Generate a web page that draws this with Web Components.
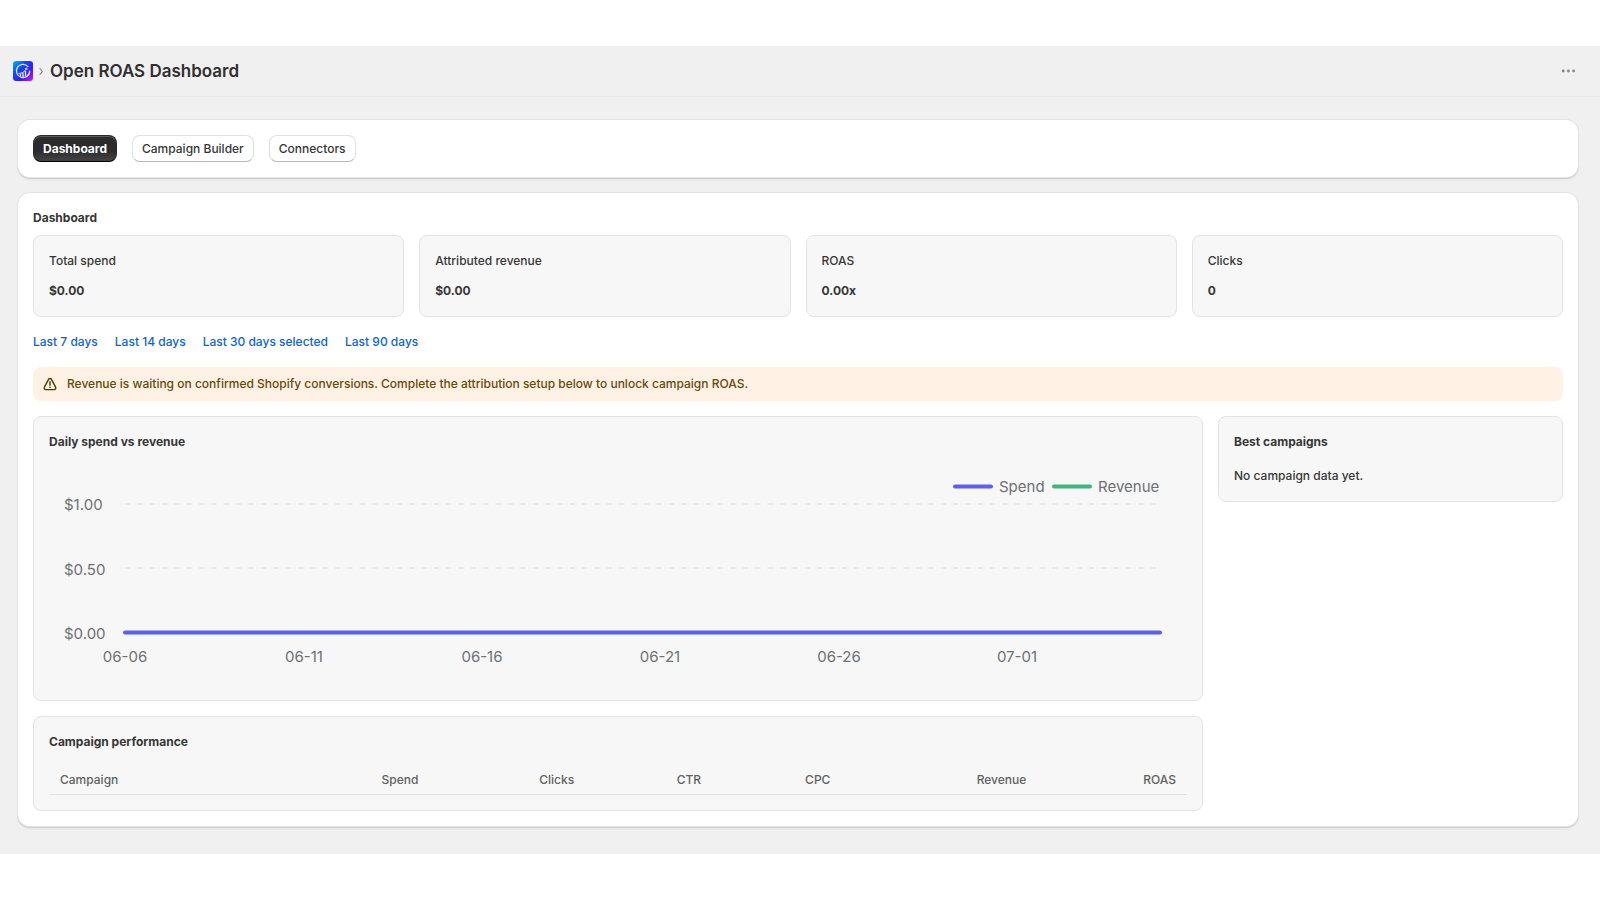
<!DOCTYPE html>
<html lang="en">
<head>
<meta charset="utf-8">
<title>Open ROAS Dashboard</title>
<style>
    body {
        margin: 0;
        padding: 46px 0;
        background: #fff;
        color: #363636;
        font-family: Inter, "Liberation Sans", sans-serif;
        font-size: 12px;
        font-weight: 500;
        line-height: 20px;
    }
</style>
</head>
<body>
<roas-app></roas-app>

<script>
class AppHeader extends HTMLElement {
    constructor() {
        super();
        this.attachShadow({ mode: 'open' });
        this.shadowRoot.innerHTML = `
        <style>
            :host {
                display: block;
                border-bottom: 1px solid #e9e9e9;
            }

            header {
                display: flex;
                align-items: center;
                height: 50px;
                padding: 0 22px 0 13px;
            }

            .chevron {
                margin: 0 6px 0 5px;
            }

            svg {
                display: block;
            }

            h1 {
                flex: 1;
                margin: 0;
                color: #303030;
                font-size: 17px;
                font-weight: 600;
                line-height: 24px;
            }

            button {
                padding: 2px;
                border: 0;
                background: none;
            }
        </style>

        <header>
            <svg width="20" height="20" viewBox="0 0 20 20" aria-hidden="true">
                <defs>
                    <linearGradient id="bg" x1="0" y1="0" x2="1" y2="1">
                        <stop offset="0" stop-color="#08b4fb"/>
                        <stop offset=".35" stop-color="#0a4cf8"/>
                        <stop offset=".65" stop-color="#3a1cf0"/>
                        <stop offset="1" stop-color="#d615f2"/>
                    </linearGradient>
                </defs>
                <rect width="20" height="20" rx="3" fill="url(#bg)"/>
                <path d="M15 5.600A6.600 6.600 0 1 0 16.600 9.600c.2 2.800-1.200 5.200-3.400 6.200" fill="none" stroke="#dfe6ff" stroke-width="1.300" stroke-linecap="round"/>
                <path d="M7.500 15.500v-2.500M10 16v-4M12.500 15v-5" stroke="#dfe6ff" stroke-width="1.400"/>
                <path d="M5.500 12.500c3.500 0 6-1.500 8-5M12 7.800l1.700-.8.4 1.900" fill="none" stroke="#dfe6ff" stroke-width="1"/>
            </svg>
            <svg class="chevron" width="6" height="10" viewBox="0 0 6 10" aria-hidden="true">
                <path d="M2 2.500l2.300 3L2 8.500" fill="none" stroke="#8a8a8a" stroke-width="1.200" stroke-linecap="round"/>
            </svg>
            <h1><slot></slot></h1>
            <button type="button" aria-label="More actions">
                <svg width="16" height="16" viewBox="0 0 16 16" fill="#858585">
                    <circle cx="3.200" cy="8" r="1.400"/>
                    <circle cx="8.400" cy="8" r="1.400"/>
                    <circle cx="13.600" cy="8" r="1.400"/>
                </svg>
            </button>
        </header>
`
    }
}

class UiSection extends HTMLElement {
    constructor() {
        super();
        this.attachShadow({ mode: 'open' });
        this.shadowRoot.innerHTML = `
        <style>
            :host {
                display: block;
                padding: 15px;
                border-radius: 12px;
                background: #fff;
                box-shadow: 0 0 0 1px #e3e3e3, 0 1px 0 1px #cfcfcf, 0 3px 3px rgba(0, 0, 0, .05);
            }
        </style>
        <slot></slot>
`
    }
}

class UiBox extends HTMLElement {
    constructor() {
        super();
        this.attachShadow({ mode: 'open' });
        this.shadowRoot.innerHTML = `
        <style>
            :host {
                display: block;
                box-sizing: border-box;
                padding: 15px;
                border: 1px solid #e3e3e3;
                border-radius: 8px;
                background: #f7f7f7;
            }

            h3 {
                margin: 0 0 14px;
                font-size: 12px;
                font-weight: 650;
                line-height: 20px;
            }
        </style>
        <h3></h3>
        <slot></slot>
`
    }

    connectedCallback() {
        this.shadowRoot.querySelector('h3').textContent = this.getAttribute('heading');
    }
}

class NavButton extends HTMLElement {
    constructor() {
        super();
        this.attachShadow({ mode: 'open' });
        this.shadowRoot.innerHTML = `
        <style>
            :host {
                display: block;
            }

            button {
                display: block;
                padding: 5px 9px;
                border: 1px solid #e0e0e0;
                border-bottom-color: #b8b8b8;
                border-radius: 8px;
                background: #fff;
                color: #363636;
                font: 500 12px/15px Inter, "Liberation Sans", sans-serif;
            }

            :host([primary]) button {
                border-color: #2a2a2a;
                border-bottom-color: #000;
                background: linear-gradient(#2c2c2c 60%, #444);
                box-shadow: inset 0 1px 0 #5c5c5c;
                color: #fff;
                font-weight: 650;
            }
        </style>
        <button type="button"><slot></slot></button>
`
    }
}

class StatCard extends HTMLElement {
    constructor() {
        super();
        this.attachShadow({ mode: 'open' });
        this.shadowRoot.innerHTML = `
        <style>
            :host {
                display: block;
                padding: 15px;
                border: 1px solid #e3e3e3;
                border-radius: 8px;
                background: #f7f7f7;
            }

            p {
                margin: 0 0 10px;
            }

            strong {
                display: block;
                font-weight: 650;
            }
        </style>
        <p></p>
        <strong><slot></slot></strong>
`
    }

    connectedCallback() {
        this.shadowRoot.querySelector('p').textContent = this.getAttribute('label');
    }
}

class RangeLinks extends HTMLElement {
    constructor() {
        super();
        this.attachShadow({ mode: 'open' });
        this.shadowRoot.innerHTML = `
        <style>
            :host {
                display: block;
            }

            nav {
                display: flex;
                gap: 17px;
            }

            a {
                color: #0d63d6;
                text-decoration: none;
            }
        </style>
        <nav aria-label="Date range">
            <a href="#7">Last 7 days</a>
            <a href="#14">Last 14 days</a>
            <a href="#30">Last 30 days selected</a>
            <a href="#90">Last 90 days</a>
        </nav>
`
    }
}

class WarningBanner extends HTMLElement {
    constructor() {
        super();
        this.attachShadow({ mode: 'open' });
        this.shadowRoot.innerHTML = `
        <style>
            :host {
                display: flex;
                align-items: center;
                gap: 8px;
                padding: 7px 8px;
                border-radius: 8px;
                background: #fff1e3;
                color: #664a0a;
            }
        </style>
        <svg width="18" height="20" viewBox="0 0 18 20" fill="none" stroke="#4f3700" stroke-width="1.400" stroke-linecap="round" stroke-linejoin="round" aria-hidden="true">
            <path d="M7.700 5.200 3.400 13.200c-.6 1.200.1 2.400 1.300 2.400h8.600c1.200 0 1.900-1.200 1.300-2.400L10.300 5.200c-.6-1-2-1-2.600 0z"/>
            <path d="M9 7.800v3.400M9 13.300v.1"/>
        </svg>
        <span><slot></slot></span>
`
    }
}

class SpendChart extends HTMLElement {
    constructor() {
        super();
        this.attachShadow({ mode: 'open' });
        this.shadowRoot.innerHTML = `
        <style>
            :host {
                display: block;
            }

            svg {
                display: block;
                width: 100%;
                height: auto;
            }

            text {
                fill: #6d7175;
                font-size: 15px;
                font-weight: 400;
            }

            .grid {
                stroke: #e8e8ee;
                stroke-width: 2;
                stroke-dasharray: 5 7.36;
            }

            .line {
                stroke-width: 4;
                stroke-linecap: round;
            }

            .spend {
                stroke: #5c5cff;
            }

            .revenue {
                stroke: #3db57c;
            }
        </style>
        <svg viewBox="0 0 1138 219" role="img" aria-label="Daily spend vs revenue">
            <g class="grid">
                <path d="M76 38H1110"/>
                <path d="M76 102H1110"/>
            </g>
            <g class="y">
                <text x="15" y="44">$1.00</text>
                <text x="15" y="109">$0.50</text>
                <text x="15" y="173">$0.00</text>
            </g>
            <g class="x" text-anchor="middle"></g>
            <path class="line spend" d="M76 166.500H1111"/>
            <path class="line spend" d="M906 20.500H942"/>
            <text x="950" y="26">Spend</text>
            <path class="line revenue" d="M1005 20.500H1041"/>
            <text x="1049" y="26">Revenue</text>
        </svg>
`
    }

    connectedCallback() {
        const days = ['06-06', '06-11', '06-16', '06-21', '06-26', '07-01'];
        this.shadowRoot.querySelector('.x').innerHTML = days
            .map((day, i) => `<text x="${Math.round(76.4 + i * 178.3)}" y="196">${day}</text>`)
            .join('');
    }
}

class CampaignTable extends HTMLElement {
    constructor() {
        super();
        this.attachShadow({ mode: 'open' });
        this.shadowRoot.innerHTML = `
        <style>
            :host {
                display: block;
            }

            table {
                width: 100%;
                border-collapse: collapse;
            }

            th {
                padding: 6px 11px;
                border-bottom: 1px solid #e3e3e3;
                color: #616161;
                font-size: 12px;
                font-weight: 500;
                line-height: 16px;
                text-align: right;
            }

            th:first-child {
                text-align: left;
            }
        </style>
        <table>
            <thead>
                <tr>
                    <th>Campaign</th>
                    <th>Spend</th>
                    <th>Clicks</th>
                    <th>CTR</th>
                    <th>CPC</th>
                    <th>Revenue</th>
                    <th>ROAS</th>
                </tr>
            </thead>
            <tbody></tbody>
        </table>
`
    }
}

class RoasApp extends HTMLElement {
    constructor() {
        super();
        this.attachShadow({ mode: 'open' });
        this.shadowRoot.innerHTML = `
        <style>
            :host {
                display: block;
                background: #f0f0f0;
            }

            main {
                display: flex;
                flex-direction: column;
                gap: 16px;
                padding: 23px 22px 28px 18px;
            }

            .tabs {
                display: flex;
                gap: 15px;
            }

            h2 {
                margin: 0 0 7px;
                font-size: 12px;
                font-weight: 650;
                line-height: 20px;
            }

            .stack {
                display: flex;
                flex-direction: column;
                gap: 15px;
                min-width: 0;
            }

            .stats {
                display: grid;
                grid-template-columns: repeat(4, 1fr);
                gap: 15px;
            }

            .columns {
                display: grid;
                grid-template-columns: 78fr 23fr;
                align-items: start;
                gap: 15px;
            }

            p {
                margin: 0;
            }
        </style>

        <app-header>Open ROAS Dashboard</app-header>
        <main>
            <ui-section>
                <nav class="tabs">
                    <nav-button primary>Dashboard</nav-button>
                    <nav-button>Campaign Builder</nav-button>
                    <nav-button>Connectors</nav-button>
                </nav>
            </ui-section>

            <ui-section>
                <h2>Dashboard</h2>
                <div class="stack">
                    <div class="stats">
                        <stat-card label="Total spend">$0.00</stat-card>
                        <stat-card label="Attributed revenue">$0.00</stat-card>
                        <stat-card label="ROAS">0.00x</stat-card>
                        <stat-card label="Clicks">0</stat-card>
                    </div>
                    <range-links></range-links>
                    <warning-banner>Revenue is waiting on confirmed Shopify conversions. Complete the attribution setup below to unlock campaign ROAS.</warning-banner>
                    <div class="columns">
                        <div class="stack">
                            <ui-box heading="Daily spend vs revenue">
                                <spend-chart></spend-chart>
                            </ui-box>
                            <ui-box heading="Campaign performance">
                                <campaign-table></campaign-table>
                            </ui-box>
                        </div>
                        <ui-box heading="Best campaigns">
                            <p>No campaign data yet.</p>
                        </ui-box>
                    </div>
                </div>
            </ui-section>
        </main>
`
    }
}

customElements.define('app-header', AppHeader);
customElements.define('ui-section', UiSection);
customElements.define('ui-box', UiBox);
customElements.define('nav-button', NavButton);
customElements.define('stat-card', StatCard);
customElements.define('range-links', RangeLinks);
customElements.define('warning-banner', WarningBanner);
customElements.define('spend-chart', SpendChart);
customElements.define('campaign-table', CampaignTable);
customElements.define('roas-app', RoasApp);
</script>
</body>
</html>
